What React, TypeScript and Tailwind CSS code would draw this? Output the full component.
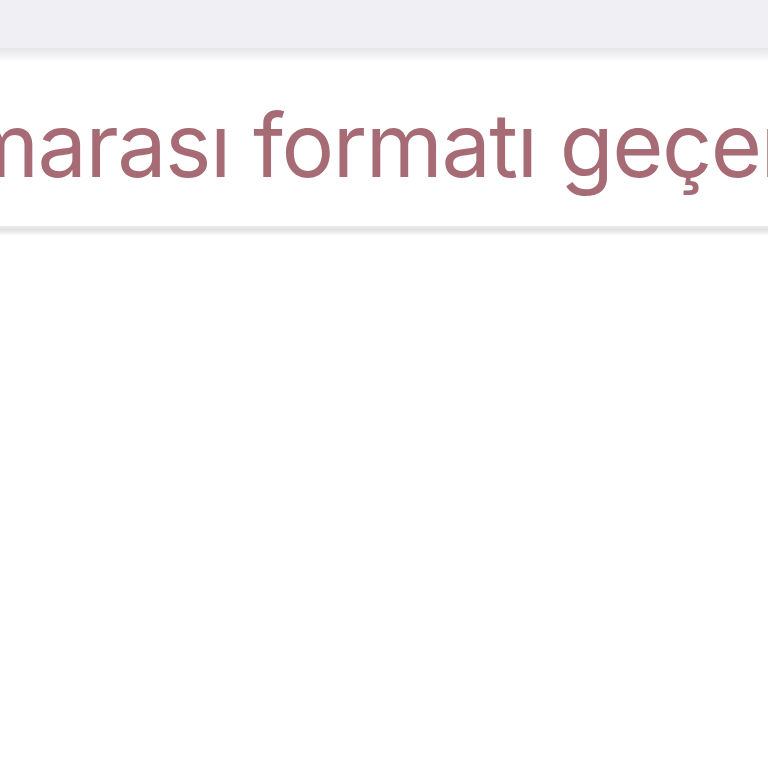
export default function App() {
  return (
    <div className="w-[768px] h-[768px] overflow-hidden bg-white" style={{ fontFamily: "Inter, 'Liberation Sans', sans-serif" }}>
      <div className="h-[48px] bg-[#efeff4]" />
      <div className="h-[14px] bg-gradient-to-b from-[#e6e6ea] to-white" />
      <div className="h-[164px] bg-white pt-[39px] overflow-hidden">
        <div className="whitespace-nowrap text-[88px] leading-none text-[#a66b74] ml-[-139px] tracking-[-1.5px]">
          numarası formatı geçersiz
        </div>
      </div>
      <div className="h-[4px] bg-gradient-to-b from-[#ececec] to-[#e2e2e2]" />
      <div className="h-[6px] bg-gradient-to-b from-[#e2e2e2] to-white" />
    </div>
  );
}
